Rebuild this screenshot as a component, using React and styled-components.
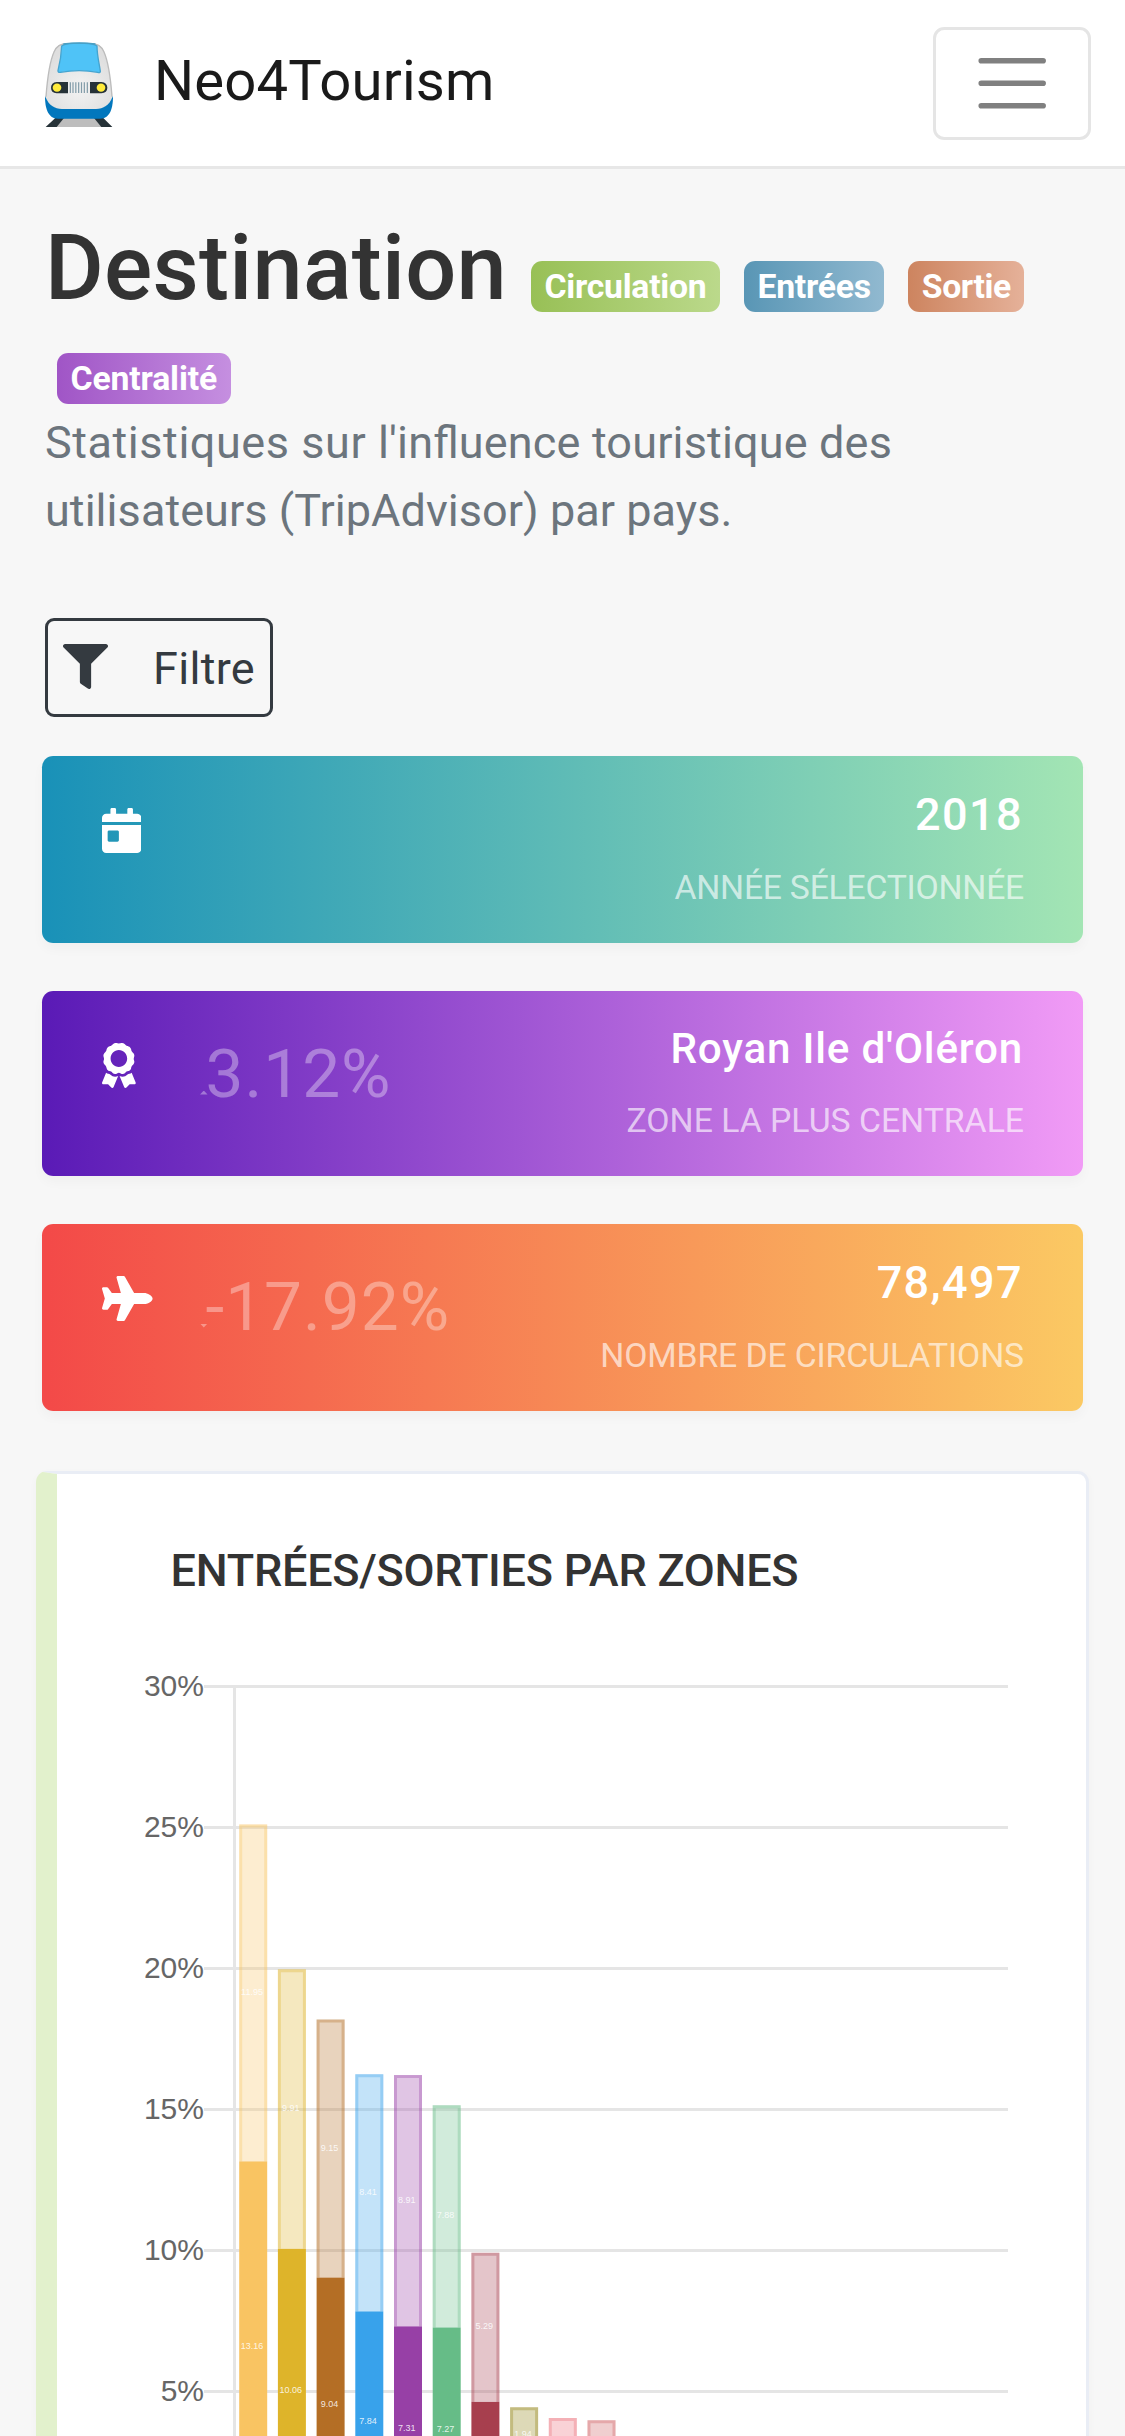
import React from "react";
import styled, { createGlobalStyle } from "styled-components";
import { FaFilter, FaCalendarDay, FaAward, FaPlane } from "react-icons/fa";

const GlobalStyle = createGlobalStyle`
  *, *::before, *::after { box-sizing: border-box; }
  body {
    margin: 0;
    background: #f7f7f7;
    font-family: Roboto, "Open Sans", sans-serif;
    font-size: 45px;
    color: #333;
  }
`;

const Page = styled.div`
  height: 2436px;
  overflow: hidden;
  background: #f7f7f7;
`;

const Navbar = styled.nav`
  display: flex;
  align-items: center;
  justify-content: space-between;
  height: 169px;
  padding: 0 34px 0 40px;
  background: #fff;
  border-bottom: 3px solid #e7e7e7;
`;

const Brand = styled.div`
  display: flex;
  align-items: center;
  gap: 34px;
`;

const BrandLogo = styled.svg`
  display: block;
  width: 80px;
  height: 94px;
  margin-top: 4px;
`;

const BrandName = styled.span`
  font-size: 56.25px;
  line-height: 84px;
  letter-spacing: 0.17px;
  padding-bottom: 4px;
  color: #1a1a1a;
`;

const Toggler = styled.button`
  display: flex;
  width: 158px;
  height: 113px;
  padding: 11px 34px;
  margin-top: 1px;
  background: transparent;
  border: 3px solid #e5e5e5;
  border-radius: 11.25px;

  svg {
    display: block;
    flex: none;
    width: 84.4px;
    height: 84.4px;
  }
`;

const Content = styled.main`
  padding: 53px 36px 0;
`;

const Heading = styled.header`
  padding: 0 9px;
`;

const TitleRow = styled.div`
  display: flex;
  flex-wrap: wrap;
  align-items: flex-start;
`;

const Title = styled.h1`
  margin: 0;
  width: 474px;
  height: 92px;
  font-size: 90px;
  font-weight: 500;
  line-height: 94px;
  letter-spacing: 0.27px;
  white-space: nowrap;
`;

const Badge = styled.span`
  height: 51px;
  margin: 39px 12px 0;
  padding: 9.4px 13.5px 0;
  border-radius: 11.25px;
  background: linear-gradient(to right, ${(p) => p.$from}, ${(p) => p.$to});
  color: #fff;
  font-size: 33.75px;
  font-weight: 700;
  line-height: 33.75px;
  letter-spacing: ${(p) => p.$track}px;
`;

const Subtitle = styled.p`
  margin: 5px 0 0;
  color: #6c757d;
  line-height: 67.5px;
  font-feature-settings: "liga" 1;
`;

const Run = styled.span`
  letter-spacing: ${(p) => p.$track}px;
`;

const FilterButton = styled.button`
  display: flex;
  align-items: center;
  gap: 45px;
  width: 228px;
  height: 99px;
  margin: 73.500px 0 39px 9px;
  padding: 2px 0 0 15px;
  background: transparent;
  border: 3px solid #343a40;
  border-radius: 9px;
  color: #343a40;
  font-family: inherit;
  font-size: 45px;
  letter-spacing: 0.3px;

  svg {
    display: block;
    flex: none;
    margin-bottom: 4px;
  }
`;

const Cards = styled.section`
  display: flex;
  flex-direction: column;
  gap: 48px;
  padding: 0 6px;
`;

const StatCard = styled.article`
  display: flex;
  justify-content: space-between;
  height: ${(p) => p.$height}px;
  padding: 0 59px 0 60px;
  border-radius: 11.25px;
  background: linear-gradient(to right, ${(p) => p.$from}, ${(p) => p.$to});
  box-shadow: 0 6px 12px rgba(0, 0, 0, 0.03);
  color: #fff;
`;

const StatSide = styled.div`
  display: flex;
  align-items: flex-start;
`;

const StatIcon = styled.div`
  width: 98px;
  padding-top: 52px;

  svg {
    display: block;
    width: ${(p) => p.$width}px;
    height: 45px;
  }
`;

const Variation = styled.div`
  display: flex;
  align-items: flex-end;
  margin-top: 49px;
  color: rgba(255, 255, 255, 0.35);
  font-size: 67.5px;
  line-height: 68px;
  letter-spacing: 1px;
`;

const Caret = styled.span`
  width: 7.5px;
  height: 4px;
  margin: 0 -2px 13px 0;
  background: currentColor;
  clip-path: ${(p) =>
    p.$up ? "polygon(50% 0, 100% 100%, 0 100%)" : "polygon(0 0, 100% 0, 50% 100%)"};
`;

const StatText = styled.div`
  padding-top: 25.4px;
  text-align: right;
`;

const StatValue = styled.div`
  margin-right: 1px;
  font-size: ${(p) => (p.$compact ? 42.2 : 45)}px;
  line-height: ${(p) => (p.$compact ? 65 : 67.5)}px;
  font-weight: 500;
  letter-spacing: ${(p) => (p.$compact ? 0.8 : 1.4)}px;
`;

const StatLabel = styled.div`
  margin-top: 6px;
  font-size: 33.75px;
  line-height: 67.5px;
  letter-spacing: ${(p) => p.$track}px;
  text-transform: uppercase;
  color: rgba(255, 255, 255, 0.65);
`;

const Panel = styled.section`
  margin-top: 60px;
  background: #fff;
  border: 3px solid #e9edf5;
  border-left: 21px solid #e2f1cc;
  border-radius: 11.25px;
  box-shadow: 0 3px 9px rgba(0, 0, 0, 0.03);
`;

const PanelTitle = styled.h2`
  margin: 63px 0 56px 113.5px;
  font-size: 45px;
  font-weight: 500;
  line-height: 67.5px;
  letter-spacing: -0.25px;
  text-transform: uppercase;
`;

const ChartCanvas = styled.svg`
  display: block;
  width: 1028px;
  height: 890px;

  .tick {
    font: 30px "Liberation Sans", Arial, sans-serif;
    fill: #666;
    text-anchor: end;
  }

  .value {
    font: 9px "Liberation Sans", Arial, sans-serif;
    fill: rgba(255, 255, 255, 0.85);
    text-anchor: middle;
  }
`;

const BADGES = [
  { label: "Circulation", from: "#98c056", to: "#bbd98b", track: -0.27 },
  { label: "Entrées", from: "#5996b5", to: "#91b9d0", track: -0.25 },
  { label: "Sortie", from: "#cd845f", to: "#e5b199", track: -0.45 },
  { label: "Centralité", from: "#a055c6", to: "#c58fe0", track: -0.15 },
];

const STATS = [
  {
    icon: FaCalendarDay,
    iconWidth: 39.4,
    value: "2018",
    label: "Année sélectionnée",
    from: "#1991b8",
    to: "#a3e5b4",
    height: 187,
    track: -0.25,
  },
  {
    icon: FaAward,
    iconWidth: 33.75,
    variation: "3.12%",
    up: true,
    value: "Royan Ile d'Oléron",
    label: "Zone la plus centrale",
    from: "#5a1ab6",
    to: "#f19bf6",
    height: 185,
    compact: true,
    track: 0,
  },
  {
    icon: FaPlane,
    iconWidth: 50.6,
    variation: "-17.92%",
    up: false,
    value: "78,497",
    label: "Nombre de circulations",
    from: "#f34948",
    to: "#fbc963",
    height: 187,
    track: -0.13,
  },
];

const BARS = [
  { entries: 13.16, exits: 11.95, color: "#f9c462" },
  { entries: 10.06, exits: 9.91, color: "#deb42a" },
  { entries: 9.04, exits: 9.15, color: "#b46e25" },
  { entries: 7.84, exits: 8.41, color: "#38a2eb" },
  { entries: 7.31, exits: 8.91, color: "#9740a6" },
  { entries: 7.27, exits: 7.88, color: "#66bc87" },
  { entries: 4.63, exits: 5.29, color: "#a73f4e" },
  { entries: 2.5, exits: 1.94, color: "#908010" },
  { entries: 2.2, exits: 1.86, color: "#eb6976" },
  { entries: 2.1, exits: 1.88, color: "#cd5c5f" },
];

const ZERO = 872.5;
const UNIT = 28.2;
const FOLD = 776;
const TICKS = [30, 25, 20, 15, 10, 5];
const y = (v) => ZERO - v * UNIT;

function TrainLogo() {
  return (
    <BrandLogo viewBox="0 0 240 282" aria-hidden="true">
      <defs>
        <radialGradient id="shell" cx="0.5" cy="0.68" r="0.6">
          <stop offset="0" stopColor="#f2f2f2" />
          <stop offset="1" stopColor="#dedede" />
        </radialGradient>
      </defs>
      <path d="M50 240H184L216 267H18Z" fill="#bdbdbd" />
      <path d="M46 240H72L50 267H17Z" fill="#263238" />
      <path d="M162 240H190L217 267H184Z" fill="#263238" />
      <path
        d="M15 176C15 205 22 242 54 242H180C212 242 219 205 219 176L205 170H29Z"
        fill="#0277bd"
      />
      <path
        d="M17 178C22 110 34 60 41 42C48 24 60 15 84 15H150C174 15 186 24 193 42C200 60 212 110 217 178C208 202 190 213 168 213H66C44 213 26 202 17 178Z"
        fill="url(#shell)"
      />
      <path
        d="M18 176C23 110 34 60 42 42C50 24 60 17 84 17H150C174 17 184 24 192 42C200 60 211 110 216 176"
        fill="none"
        stroke="#bcbcbc"
        strokeWidth="4"
      />
      <path
        d="M65 24C74 17 88 16 100 16H134C148 16 162 17 171 24C171 52 178 78 181 100Q180 106 173 103C140 97 95 97 61 103Q54 104 54 98C59 78 64 52 65 24Z"
        fill="#4fc3f7"
        stroke="#44a4d0"
        strokeWidth="4"
        strokeLinejoin="round"
      />
      <path d="M70 18Q118 11 166 18" fill="none" stroke="#4a9fc3" strokeWidth="4" />
      <path d="M50 132H84V166H50Q33 164 33 149Q33 134 50 132Z" fill="#263238" />
      <path d="M150 132H184Q202 134 202 149Q202 164 184 166H150Z" fill="#263238" />
      <ellipse cx="51" cy="149" rx="13" ry="12.5" fill="#ffeb3b" />
      <ellipse cx="183" cy="149" rx="13" ry="12.5" fill="#ffeb3b" />
      <path
        d="M91 133V165M99 133V165M107.5 133V165M116 133V165M124.5 133V165M133 133V165M142 133V165"
        stroke="#819ba8"
        strokeWidth="3.6"
      />
    </BrandLogo>
  );
}

function ValueLabel({ x, at, value }) {
  if (at > FOLD) return null;
  return (
    <text className="value" x={x} y={at + 2}>
      {value}
    </text>
  );
}

function Chart() {
  return (
    <ChartCanvas viewBox="0 0 1028 890">
      {TICKS.map((t) => (
        <g key={t}>
          <rect x="147" y={y(t) - 1.5} width="804" height="3" fill="#e5e5e5" />
          <text className="tick" x="147" y={y(t) + 9}>
            {t}%
          </text>
        </g>
      ))}
      <rect x="176" y={y(30) - 1.5} width="3" height="860" fill="#e5e5e5" />
      {BARS.map((b, i) => {
        const x = 182.2 + i * 38.7;
        const split = y(b.entries);
        const top = y(b.entries + b.exits);
        return (
          <g key={i}>
            <rect x={x} y={split} width="28" height={ZERO - split} fill={b.color} />
            <rect x={x} y={top} width="28" height={split - top} fill={b.color} fillOpacity="0.3" />
            <path
              d={`M${x + 1.5} ${split}V${top + 1.5}H${x + 26.5}V${split}`}
              fill="none"
              stroke={b.color}
              strokeOpacity="0.33"
              strokeWidth="3"
            />
            <ValueLabel x={x + 12.8} at={(ZERO + split) / 2} value={b.entries} />
            <ValueLabel x={x + 12.8} at={(split + top) / 2} value={b.exits} />
          </g>
        );
      })}
    </ChartCanvas>
  );
}

export default function App() {
  return (
    <Page>
      <GlobalStyle />
      <Navbar>
        <Brand>
          <TrainLogo />
          <BrandName>Neo4Tourism</BrandName>
        </Brand>
        <Toggler aria-label="Menu">
          <svg viewBox="0 0 30 30">
            <path
              d="M4 7h22M4 15h22M4 23h22"
              stroke="#808080"
              strokeWidth="2"
              strokeLinecap="round"
            />
          </svg>
        </Toggler>
      </Navbar>
      <Content>
        <Heading>
          <TitleRow>
            <Title>Destination</Title>
            {BADGES.map((b) => (
              <Badge key={b.label} $from={b.from} $to={b.to} $track={b.track}>
                {b.label}
              </Badge>
            ))}
          </TitleRow>
          <Subtitle>
            <Run $track={0.55}>Statistiques sur </Run>
            <Run $track={0.16}>l'influence touristique des </Run>
            <Run $track={0.05}>utilisateurs (TripAdvisor) par pays.</Run>
          </Subtitle>
        </Heading>
        <FilterButton>
          <FaFilter size={45} />
          Filtre
        </FilterButton>
        <Cards>
          {STATS.map((s) => (
            <StatCard key={s.label} $from={s.from} $to={s.to} $height={s.height}>
              <StatSide>
                <StatIcon $width={s.iconWidth}>
                  <s.icon />
                </StatIcon>
                {s.variation && (
                  <Variation>
                    <Caret $up={s.up} />
                    {s.variation}
                  </Variation>
                )}
              </StatSide>
              <StatText>
                <StatValue $compact={s.compact}>{s.value}</StatValue>
                <StatLabel $track={s.track}>{s.label}</StatLabel>
              </StatText>
            </StatCard>
          ))}
        </Cards>
        <Panel>
          <PanelTitle>Entrées/Sorties par zones</PanelTitle>
          <Chart />
        </Panel>
      </Content>
    </Page>
  );
}
